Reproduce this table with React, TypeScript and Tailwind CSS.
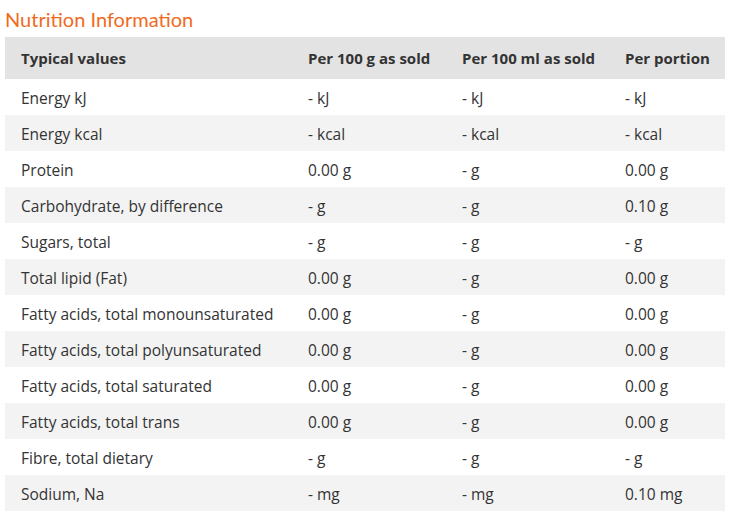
const rows: [string, string, string, string][] = [
  ['Energy kJ', '- kJ', '- kJ', '- kJ'],
  ['Energy kcal', '- kcal', '- kcal', '- kcal'],
  ['Protein', '0.00 g', '- g', '0.00 g'],
  ['Carbohydrate, by difference', '- g', '- g', '0.10 g'],
  ['Sugars, total', '- g', '- g', '- g'],
  ['Total lipid (Fat)', '0.00 g', '- g', '0.00 g'],
  ['Fatty acids, total monounsaturated', '0.00 g', '- g', '0.00 g'],
  ['Fatty acids, total polyunsaturated', '0.00 g', '- g', '0.00 g'],
  ['Fatty acids, total saturated', '0.00 g', '- g', '0.00 g'],
  ['Fatty acids, total trans', '0.00 g', '- g', '0.00 g'],
  ['Fibre, total dietary', '- g', '- g', '- g'],
  ['Sodium, Na', '- mg', '- mg', '0.10 mg'],
];

export default function App() {
  return (
    <div className="w-[733px] h-[519px] bg-white px-[5px] pt-[6px] text-[#333333] font-['Open_Sans','Noto_Sans',sans-serif] overflow-hidden">
      <h2 className="text-[#f06a1d] text-[20px] leading-[26px] mb-[5px] font-['Lato',sans-serif]">Nutrition Information</h2>
      <table className="w-[720px] border-collapse table-fixed">
        <colgroup>
          <col className="w-[287px]" />
          <col className="w-[154px]" />
          <col className="w-[163px]" />
          <col className="w-[116px]" />
        </colgroup>
        <thead>
          <tr className="bg-[#e3e3e3] h-[42px] text-left text-[15px]">
            <th className="pl-4 font-bold">Typical values</th>
            <th className="pl-4 font-bold">Per 100 g as sold</th>
            <th className="pl-4 font-bold">Per 100 ml as sold</th>
            <th className="pl-4 font-bold">Per portion</th>
          </tr>
        </thead>
        <tbody className="text-[15.5px]">
          {rows.map((r, i) => (
            <tr key={r[0]} className={`h-[36px] ${i % 2 === 1 ? 'bg-[#f3f3f3]' : 'bg-white'}`}>
              {r.map((c, j) => (
                <td key={j} className="pl-4 pt-[4px]">{c}</td>
              ))}
            </tr>
          ))}
        </tbody>
      </table>
    </div>
  );
}
